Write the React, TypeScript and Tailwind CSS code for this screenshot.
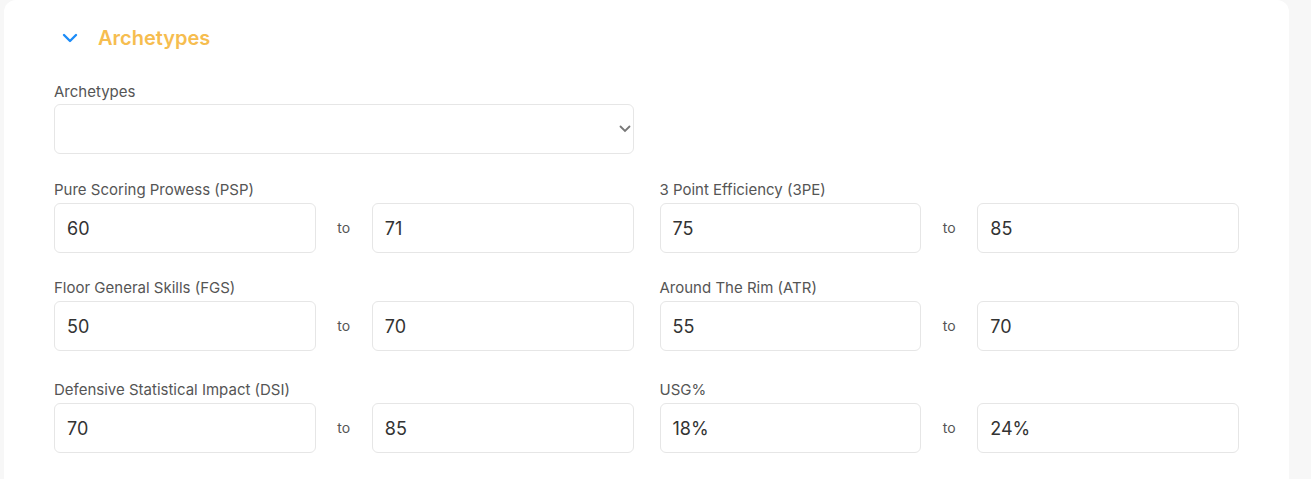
import React from 'react';

type Range = { label: string; from: string; to: string };

const rows: [Range, Range][] = [
  [
    { label: 'Pure Scoring Prowess (PSP)', from: '60', to: '71' },
    { label: '3 Point Efficiency (3PE)', from: '75', to: '85' },
  ],
  [
    { label: 'Floor General Skills (FGS)', from: '50', to: '70' },
    { label: 'Around The Rim (ATR)', from: '55', to: '70' },
  ],
  [
    { label: 'Defensive Statistical Impact (DSI)', from: '70', to: '85' },
    { label: 'USG%', from: '18%', to: '24%' },
  ],
];

const rowGaps = ['mt-[26px]', 'mt-[25px]', 'mt-[29px]'];

const Box: React.FC<{ value: string }> = ({ value }) => (
  <div className="flex-1 h-[50px] rounded-md border border-[#e6e6e6] bg-white flex items-center px-3 text-[18px] text-[#333]">
    {value}
  </div>
);

const RangeField: React.FC<{ item: Range }> = ({ item }) => (
  <div>
    <div className="text-[15px] leading-5 text-[#555] mb-[3px]">{item.label}</div>
    <div className="flex items-center">
      <Box value={item.from} />
      <span className="w-[56px] text-center text-[14px] text-[#555] -mt-[2px]">to</span>
      <Box value={item.to} />
    </div>
  </div>
);

export default function App() {
  return (
    <div
      className="min-h-[479px] bg-[#f7f7f7] pl-[4px] pr-[22px]"
      style={{ fontFamily: 'Inter, "Noto Sans", sans-serif' }}
    >
      <div className="bg-white rounded-t-[12px] min-h-[479px] pl-[50px] pr-[50px] pt-[24px]">
        <div className="flex items-center h-[28px]">
          <svg width="16" height="10" viewBox="0 0 16 10" className="ml-[8px]">
            <path d="M2 2l6 6 6-6" fill="none" stroke="#1d8cf8" strokeWidth="2.4" strokeLinecap="round" strokeLinejoin="round" />
          </svg>
          <span className="ml-[20px] text-[20px] font-semibold text-[#f6bd4f]">Archetypes</span>
        </div>

        <div className="mt-[30px] w-[580px]">
          <div className="text-[15px] leading-5 text-[#555] mb-[2px]">Archetypes</div>
          <div className="h-[50px] rounded-md border border-[#e6e6e6] bg-white flex items-center justify-end pr-[2px]">
            <svg width="12" height="8" viewBox="0 0 12 8">
              <path d="M1.5 1.5l4.5 4.5 4.5-4.5" fill="none" stroke="#777" strokeWidth="1.8" strokeLinecap="round" />
            </svg>
          </div>
        </div>

        {rows.map((pair, i) => (
          <div key={i} className={`${rowGaps[i]} grid grid-cols-2 gap-x-[26px]`}>
            <RangeField item={pair[0]} />
            <RangeField item={pair[1]} />
          </div>
        ))}
      </div>
    </div>
  );
}
